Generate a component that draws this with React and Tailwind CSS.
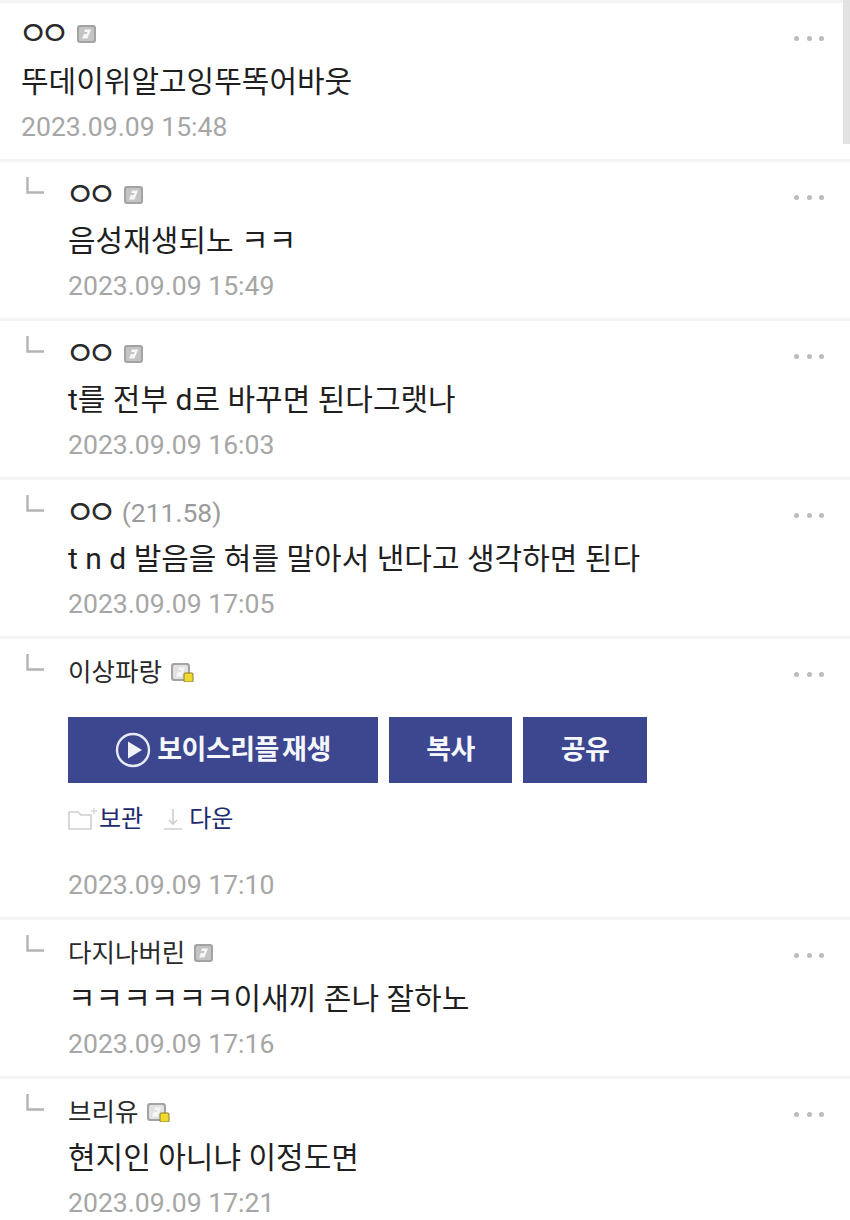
import React from "react";

const comments = [
  { id: 1, name: "ㅇㅇ", icon: "fixed", text: "뚜데이위알고잉뚜똑어바웃", date: "2023.09.09 15:48", top: true },
  { id: 2, name: "ㅇㅇ", icon: "fixed", text: "음성재생되노 ㅋㅋ", date: "2023.09.09 15:49" },
  { id: 3, name: "ㅇㅇ", icon: "fixed", text: "t를 전부 d로 바꾸면 된다그랫나", date: "2023.09.09 16:03" },
  { id: 4, name: "ㅇㅇ", ip: "(211.58)", text: "t n d 발음을 혀를 말아서 낸다고 생각하면 된다", date: "2023.09.09 17:05" },
  { id: 5, name: "이상파랑", icon: "lock", voice: true, date: "2023.09.09 17:10" },
  { id: 6, name: "다지나버린", icon: "fixed", text: "ㅋㅋㅋㅋㅋㅋ이새끼 존나 잘하노", date: "2023.09.09 17:16" },
  { id: 7, name: "브리유", icon: "lock", text: "현지인 아니냐 이정도면", date: "2023.09.09 17:21" },
];

function NickIcon({ lock }) {
  return (
    <svg width="24" height="20" viewBox="0 0 24 20" className="shrink-0">
      <rect x="1" y="1" width="19" height="18" rx="3" fill="#a3a3a3" />
      <rect x="3" y="3" width="15" height="14" rx="1.5" fill={lock ? "#e2e2e2" : "#c4c4c4"} />
      <path d="M9 5.5h6l-3.5 9H6l1.8-4.5h3l.7-2H8.2Z" fill="#f6f6f6" />
      {lock && <rect x="14" y="11" width="9" height="9" rx="1" fill="#f0d92e" stroke="#8a7d30" strokeWidth="1" />}
    </svg>
  );
}

function ReplyMark() {
  return (
    <svg width="18" height="18" viewBox="0 0 18 18">
      <path d="M1.5 0v15.5H18" fill="none" stroke="#b4b4b4" strokeWidth="2.4" />
    </svg>
  );
}

function Dots() {
  return (
    <div className="flex gap-[7.5px] mr-[26px]">
      <span className="w-[5px] h-[5px] rounded-full bg-[#bcbcbc]" />
      <span className="w-[5px] h-[5px] rounded-full bg-[#bcbcbc]" />
      <span className="w-[5px] h-[5px] rounded-full bg-[#bcbcbc]" />
    </div>
  );
}

function VoiceBlock() {
  return (
    <div>
      <div className="flex gap-[11px] mt-[30px] text-[#f6f7fb] font-bold text-[27px] tracking-[-0.5px]">
        <button className="w-[310px] h-[66px] bg-[#3c4790] flex items-center justify-center gap-[6px] [word-spacing:-3px]">
          <svg width="36" height="36" viewBox="0 0 36 36">
            <circle cx="18" cy="18" r="16" fill="none" stroke="#e8ebf6" strokeWidth="2.4" />
            <path d="M13 9.5 27 18 13 26.5Z" fill="#f1f3fa" />
          </svg>
          보이스리플 재생
        </button>
        <button className="w-[123px] h-[66px] bg-[#3c4790]">복사</button>
        <button className="w-[124px] h-[66px] bg-[#3c4790]">공유</button>
      </div>
      <div className="flex items-center mt-[19px] h-[34px] text-[24px] text-[#1d2a6e]">
        <svg width="30" height="24" viewBox="0 0 30 24" className="mr-[1px]">
          <path d="M1 5h9l3 3h10v14H1Z" fill="none" stroke="#cfcfcf" strokeWidth="1.6" />
          <path d="M26 1v6M23 4h6" stroke="#d8d8d8" strokeWidth="1.4" />
        </svg>
        <span>보관</span>
        <svg width="20" height="24" viewBox="0 0 20 24" className="ml-[20px] mr-[6px]">
          <path d="M10 2v15M6 13l4 4 4-4M1 22h18" fill="none" stroke="#cfcfcf" strokeWidth="1.6" />
        </svg>
        <span>다운</span>
      </div>
    </div>
  );
}

function Comment({ c }) {
  const plainName = c.name === "ㅇㅇ";
  return (
    <div className={`flex items-start border-t-[3px] border-[#f3f3f3] ${c.top ? "pl-[21px]" : "pl-[26px]"}`}>
      {!c.top && (
        <div className="w-[42px] shrink-0 pt-[15px]">
          <ReplyMark />
        </div>
      )}
      <div className={`flex-1 pb-[13px] ${c.top ? "pt-[16px]" : "pt-[18px]"}`}>
        <div className="flex items-center h-[30px] text-[25.5px] text-[#2a2a2a] gap-[8px]">
          {plainName ? <span className="text-[33px] tracking-[-8.5px] pr-[6px] -ml-[3px]">{c.name}</span> : <span>{c.name}</span>}
          {c.icon && <NickIcon lock={c.icon === "lock"} />}
          {c.ip && <span className="text-[#9b9b9b] text-[26.5px] -ml-[1px]">{c.ip}</span>}
        </div>
        {c.voice ? (
          <VoiceBlock />
        ) : (
          <div className={`${c.top ? "mt-[14px]" : "mt-[12px]"} h-[38px] leading-[38px] text-[30px] text-[#1f1f1f] whitespace-nowrap`}>{c.text}</div>
        )}
        <div className={`${c.voice ? "mt-[30px]" : "mt-[7px]"} h-[38px] leading-[38px] text-[26.6px] text-[#a6a6a6]`}>{c.date}</div>
      </div>
      <div className="pt-[33px]">
        <Dots />
      </div>
    </div>
  );
}

export default function App() {
  return (
    <div className="relative w-[850px] h-[1220px] overflow-hidden bg-white font-['Roboto','Noto_Sans_CJK_KR',sans-serif]">
      {comments.map((c) => (
        <Comment key={c.id} c={c} />
      ))}
      <div className="absolute top-0 right-0 w-[7px] h-[144px] bg-[#e2e2e2]" />
    </div>
  );
}
